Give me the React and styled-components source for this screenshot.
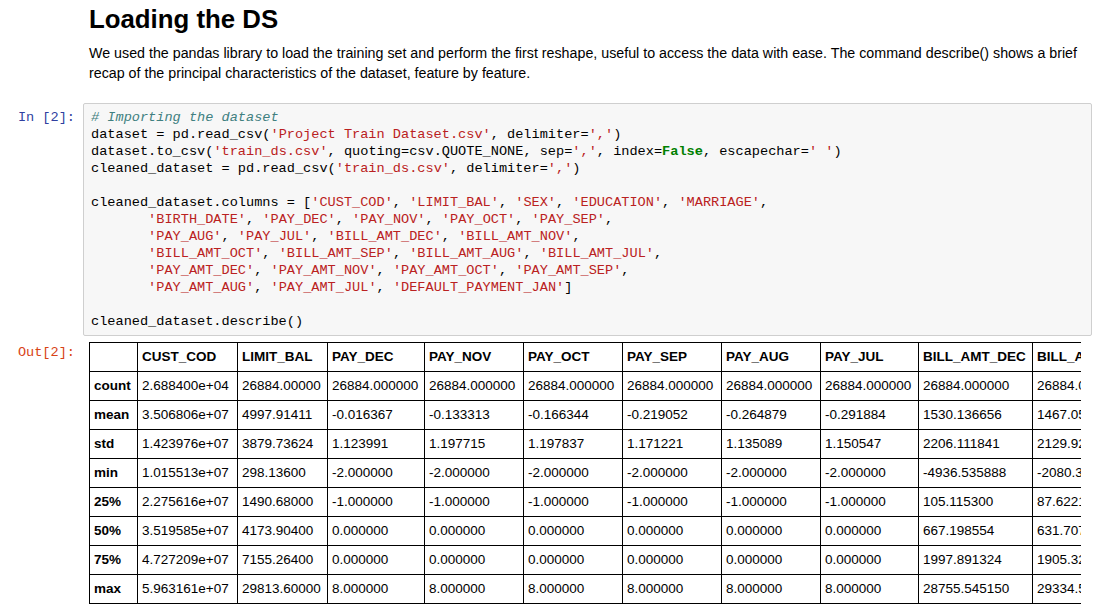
import { createGlobalStyle, styled } from "styled-components";

const GlobalStyle = createGlobalStyle`
    body {
        margin: 0;
        background: #ffffff;
        color: #000000;
        font-family: 'Liberation Sans', Arial, sans-serif;
    }
`

const codeLines = [
    "# Importing the dataset",
    "dataset = pd.read_csv('Project Train Dataset.csv', delimiter=',')",
    "dataset.to_csv('train_ds.csv', quoting=csv.QUOTE_NONE, sep=',', index=False, escapechar=' ')",
    "cleaned_dataset = pd.read_csv('train_ds.csv', delimiter=',')",
    "",
    "cleaned_dataset.columns = ['CUST_COD', 'LIMIT_BAL', 'SEX', 'EDUCATION', 'MARRIAGE',",
    "       'BIRTH_DATE', 'PAY_DEC', 'PAY_NOV', 'PAY_OCT', 'PAY_SEP',",
    "       'PAY_AUG', 'PAY_JUL', 'BILL_AMT_DEC', 'BILL_AMT_NOV',",
    "       'BILL_AMT_OCT', 'BILL_AMT_SEP', 'BILL_AMT_AUG', 'BILL_AMT_JUL',",
    "       'PAY_AMT_DEC', 'PAY_AMT_NOV', 'PAY_AMT_OCT', 'PAY_AMT_SEP',",
    "       'PAY_AMT_AUG', 'PAY_AMT_JUL', 'DEFAULT_PAYMENT_JAN']",
    "",
    "cleaned_dataset.describe()",
]

const columns = [
    { name: '', w: 48 },
    { name: 'CUST_COD', w: 100 },
    { name: 'LIMIT_BAL', w: 90 },
    { name: 'PAY_DEC', w: 97 },
    { name: 'PAY_NOV', w: 99 },
    { name: 'PAY_OCT', w: 99 },
    { name: 'PAY_SEP', w: 99 },
    { name: 'PAY_AUG', w: 99 },
    { name: 'PAY_JUL', w: 98 },
    { name: 'BILL_AMT_DEC', w: 114 },
    { name: 'BILL_AMT_NOV', w: 110 },
]

const rows = [
    ['count', '2.688400e+04', '26884.00000', '26884.000000', '26884.000000', '26884.000000', '26884.000000', '26884.000000', '26884.000000', '26884.000000', '26884.000000'],
    ['mean', '3.506806e+07', '4997.91411', '-0.016367', '-0.133313', '-0.166344', '-0.219052', '-0.264879', '-0.291884', '1530.136656', '1467.053283'],
    ['std', '1.423976e+07', '3879.73624', '1.123991', '1.197715', '1.197837', '1.171221', '1.135089', '1.150547', '2206.111841', '2129.921104'],
    ['min', '1.015513e+07', '298.13600', '-2.000000', '-2.000000', '-2.000000', '-2.000000', '-2.000000', '-2.000000', '-4936.535888', '-2080.386211'],
    ['25%', '2.275616e+07', '1490.68000', '-1.000000', '-1.000000', '-1.000000', '-1.000000', '-1.000000', '-1.000000', '105.115300', '87.622100'],
    ['50%', '3.519585e+07', '4173.90400', '0.000000', '0.000000', '0.000000', '0.000000', '0.000000', '0.000000', '667.198554', '631.707042'],
    ['75%', '4.727209e+07', '7155.26400', '0.000000', '0.000000', '0.000000', '0.000000', '0.000000', '0.000000', '1997.891324', '1905.329834'],
    ['max', '5.963161e+07', '29813.60000', '8.000000', '8.000000', '8.000000', '8.000000', '8.000000', '8.000000', '28755.545150', '29334.512160'],
]

function highlight(line) {
    if (line.startsWith('#')) return <Comment>{line}</Comment>
    return line.split(/('[^']*'|\bFalse\b)/).map((part, i) => {
        if (part.startsWith("'")) return <Str key={i}>{part}</Str>
        if (part === 'False') return <Keyword key={i}>{part}</Keyword>
        return part
    })
}

export default function App() {
    return (
        <Notebook>
            <GlobalStyle />
            <Cell>
                <Prompt />
                <Markdown>
                    <Heading>Loading the DS</Heading>
                    <Paragraph>
                        We used the pandas library to load the training set and perform the first reshape, useful to access the data with ease. The command describe() shows a brief<br />
                        recap of the principal characteristics of the dataset, feature by feature.
                    </Paragraph>
                </Markdown>
            </Cell>
            <CodeCell>
                <Prompt>In [2]:</Prompt>
                <InputArea>
                    {codeLines.map((line, i) => <CodeLine key={i}>{line === '' ? ' ' : highlight(line)}</CodeLine>)}
                </InputArea>
            </CodeCell>
            <Cell>
                <Prompt $out>Out[2]:</Prompt>
                <OutputArea>
                    <Table>
                        <colgroup>
                            {columns.map((c, i) => <col key={i} style={{ width: c.w }} />)}
                        </colgroup>
                        <thead>
                            <tr>
                                {columns.map((c, i) => <Th key={i}>{c.name}</Th>)}
                            </tr>
                        </thead>
                        <tbody>
                            {rows.map(r => (
                                <tr key={r[0]}>
                                    <Th>{r[0]}</Th>
                                    {r.slice(1).map((v, i) => <Td key={i}>{v}</Td>)}
                                </tr>
                            ))}
                        </tbody>
                    </Table>
                </OutputArea>
            </Cell>
        </Notebook>
    )
}

const Notebook = styled.main`
    width: 1107px;
    display: flex;
    flex-direction: column;
`

const Cell = styled.div`
    display: flex;
    align-items: flex-start;
`

const CodeCell = styled(Cell)`
    margin-top: 20px;
    margin-bottom: 6px;
`

const Prompt = styled.div`
    flex: none;
    width: 83px;
    box-sizing: border-box;
    padding-right: 8px;
    padding-top: ${p => p.$out ? '2px' : '6px'};
    text-align: right;
    font-family: 'Liberation Mono', monospace;
    font-size: 13.6px;
    line-height: 17px;
    color: ${p => p.$out ? '#D84315' : '#303F9F'};
`

const Markdown = styled.div`
    padding-left: 6px;
`

const Heading = styled.h1`
    margin: 4px 0 0;
    font-size: 25.8px;
    line-height: 30px;
    font-weight: bold;
`

const Paragraph = styled.p`
    margin: 9px 0 0;
    font-size: 14.25px;
    line-height: 20px;
`

const InputArea = styled.pre`
    flex: none;
    width: 1009px;
    box-sizing: border-box;
    margin: 0;
    padding: 5px 7px 5px;
    background: #f7f7f7;
    border: 1px solid #cfcfcf;
    border-radius: 2px;
    font-family: 'Liberation Mono', monospace;
    font-size: 13.6px;
    line-height: 17px;
    color: #000000;
`

const CodeLine = styled.div`
    height: 17px;
    white-space: pre;
`

const Comment = styled.span`
    color: #408080;
    font-style: italic;
`

const Str = styled.span`
    color: #BA2121;
`

const Keyword = styled.span`
    color: #008000;
    font-weight: bold;
`

const OutputArea = styled.div`
    flex: none;
    width: 998px;
    box-sizing: border-box;
    padding-left: 6px;
    overflow: hidden;
`

const Table = styled.table`
    border-collapse: collapse;
    table-layout: fixed;
    width: 1053px;
    font-size: 13.5px;
`

const Td = styled.td`
    border: 1px solid #000000;
    padding: 6px 4px;
    line-height: 16px;
    text-align: left;
    white-space: nowrap;
    overflow: hidden;
`

const Th = styled(Td).attrs({ as: 'th' })`
    font-weight: bold;
`
